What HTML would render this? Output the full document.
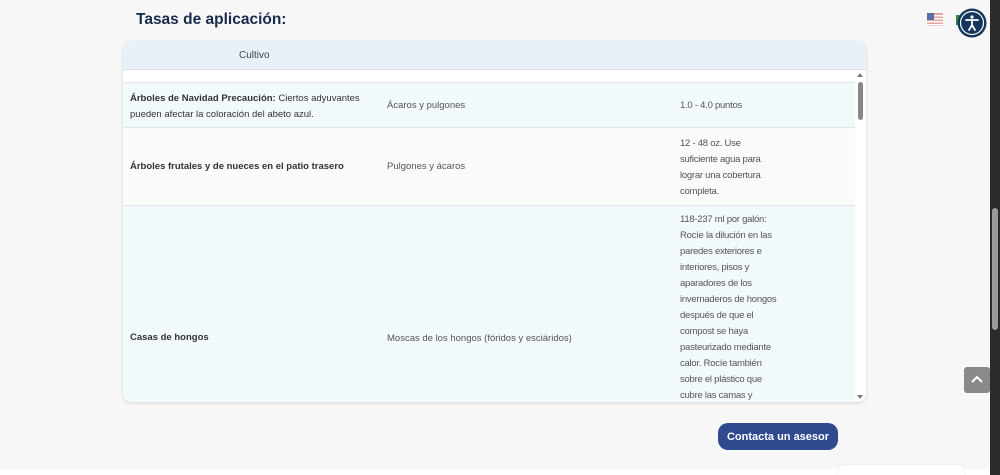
<!DOCTYPE html><html><head><meta charset="utf-8"><style>
body{margin:0;width:1000px;height:475px;background:#f7f7f7;font-family:"Liberation Sans",sans-serif;position:relative;overflow:hidden;color:#444}
h2{position:absolute;left:136px;top:11px;margin:0;font-size:15.5px;color:#1a2a4a;font-weight:bold}
.tbl{position:absolute;left:123px;top:41px;width:743px;height:361px;background:#fff;border-radius:8px;box-shadow:0 1px 3px rgba(0,0,0,.15);overflow:hidden}
.hd{height:28px;background:#e8f0f8;border-bottom:1px solid #d8dfe6;font-size:10px;color:#444;line-height:30px}
.hd span{position:absolute;left:116px}
.r{position:absolute;left:0;width:732px;border-bottom:1px solid #e2e6ea;font-size:9.5px;line-height:16px}
.r div{position:absolute}
.c1{left:7px;color:#333}.c2{left:264px;color:#555}.c3{left:557px;width:104px;color:#555;letter-spacing:-0.25px}
b{color:#333}
.sb{position:absolute;right:0;top:29px;width:11px;height:332px;background:#fff}
</style></head><body>
<h2>Tasas de aplicación:</h2>
<svg style="position:absolute;left:927px;top:13px" width="16" height="13"><rect width="16" height="13" fill="#e8a0a0"/><g fill="#fff"><rect y="2" width="16" height="1.5"/><rect y="5" width="16" height="1.5"/><rect y="8" width="16" height="1.5"/><rect y="11" width="16" height="1.5"/></g><rect width="7" height="7" fill="#5a6fa8"/></svg>
<div style="position:absolute;left:956px;top:15px;width:6px;height:10px;background:#3a8a3a"></div>
<svg style="position:absolute;left:957px;top:8px" width="30" height="30" viewBox="0 0 30 30"><circle cx="15" cy="15" r="14.5" fill="#14355c"/><circle cx="15" cy="15" r="11.5" fill="none" stroke="#fff" stroke-width="1.2"/><circle cx="15" cy="9" r="1.6" fill="#fff"/><path d="M9 12h12M15 12v5M15 17l-3 5M15 17l3 5" stroke="#fff" stroke-width="1.8" fill="none" stroke-linecap="round"/></svg>
<div class="tbl"><div class="hd"><span>Cultivo</span></div>
<div class="r" style="top:29px;height:12px;background:#fff"></div>
<div class="r" style="top:42px;height:44px;background:#f1f9fc"><div class="c1" style="top:8px;width:230px"><b>Árboles de Navidad Precaución:</b> Ciertos adyuvantes pueden afectar la coloración del abeto azul.</div><div class="c2" style="top:15px">Ácaros y pulgones</div><div class="c3" style="top:15px">1.0 - 4.0 puntos</div></div>
<div class="r" style="top:87px;height:77px;background:#fafafa"><div class="c1" style="top:31px"><b>Árboles frutales y de nueces en el patio trasero</b></div><div class="c2" style="top:31px">Pulgones y ácaros</div><div class="c3" style="top:8px;width:92px">12 - 48 oz. Use suficiente agua para lograr una cobertura completa.</div></div>
<div class="r" style="top:165px;height:200px;background:#f1f9fc;border:0"><div class="c1" style="top:124px"><b>Casas de hongos</b></div><div class="c2" style="top:125px">Moscas de los hongos (fóridos y esciáridos)</div><div class="c3" style="top:6px">118-237 ml por galón: Rocíe la dilución en las paredes exteriores e interiores, pisos y aparadores de los invernaderos de hongos después de que el compost se haya pasteurizado mediante calor. Rocíe también sobre el plástico que cubre las camas y</div></div>
<div class="sb"><div style="position:absolute;left:2px;top:3px;border:3px solid transparent;border-bottom:4px solid #777;border-top:0"></div><div style="position:absolute;left:3px;top:12px;width:5px;height:38px;background:#888;border-radius:3px"></div><div style="position:absolute;left:2px;bottom:3px;border:3px solid transparent;border-top:4px solid #777;border-bottom:0"></div></div>
</div>
<div style="position:absolute;left:718px;top:423px;width:120px;height:27px;background:#2f4a8f;border-radius:10px;color:#fff;font-size:11px;font-weight:bold;text-align:center;line-height:28px">Contacta un asesor</div>
<div style="position:absolute;left:964px;top:367px;width:26px;height:26px;background:#8a8a8a;border-radius:3px"><svg width="26" height="26"><path d="M8 15l5-5 5 5" stroke="#fff" stroke-width="2" fill="none"/></svg></div>
<div style="position:absolute;left:0;top:469px;width:990px;height:6px;background:#fff"></div>
<div style="position:absolute;left:838px;top:465px;width:126px;height:10px;background:#fff;border-radius:6px 6px 0 0;box-shadow:0 0 3px rgba(0,0,0,.1)"></div>
<div style="position:absolute;left:990px;top:0;width:10px;height:475px;background:#2b2b2b"><div style="position:absolute;left:2px;top:208px;width:6px;height:122px;background:#9a9a9a;border-radius:3px"></div></div>
</body></html>
